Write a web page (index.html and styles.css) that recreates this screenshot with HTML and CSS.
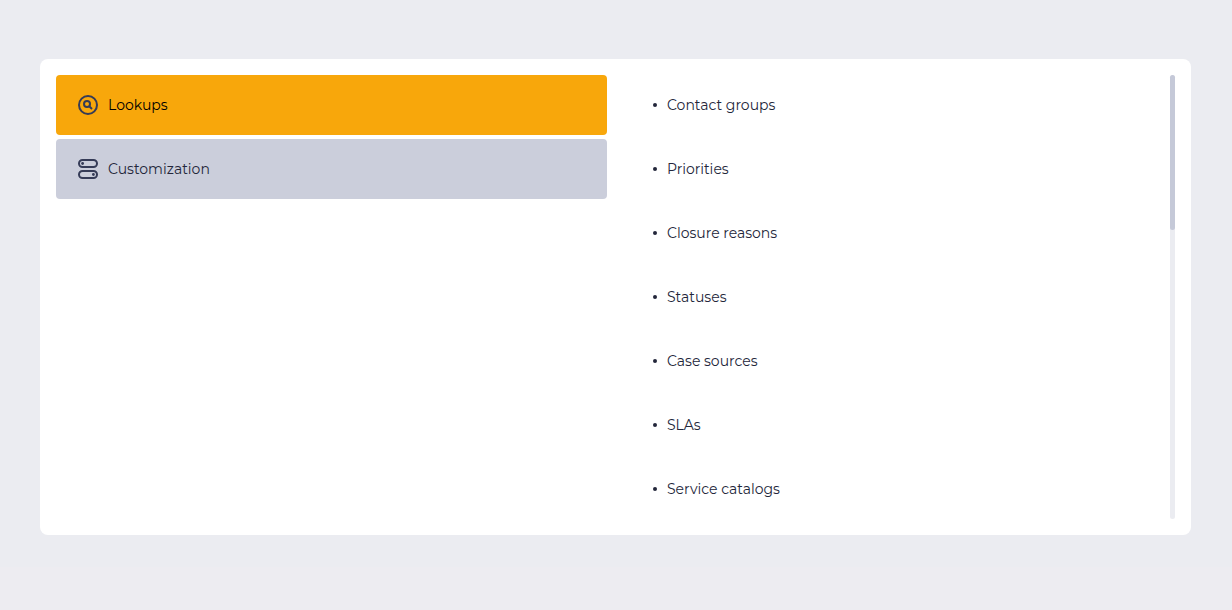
FILE: index.html
```html
<!DOCTYPE html>
<html lang="en">
<head>
  <meta charset="UTF-8">
  <title>Settings</title>
  <meta name="viewport" content="width=device-width, initial-scale=1.0">
  <link rel="stylesheet" href="styles.css">
</head>
<body>
  <main class="panel">
    <nav class="menu">
      <button type="button" class="menu-item active">
        <svg class="icon" viewBox="0 0 20 20" aria-hidden="true">
          <circle cx="10" cy="10" r="9"/>
          <circle cx="9" cy="9" r="3"/>
          <path d="M11 11L14 14"/>
        </svg>
        Lookups
      </button>
      <button type="button" class="menu-item">
        <svg class="icon" viewBox="0 0 20 20" aria-hidden="true">
          <rect x="1" y="1" width="18" height="7" rx="3.5"/>
          <rect x="1" y="12" width="18" height="7" rx="3.5"/>
          <circle class="dot" cx="4.6" cy="4.5" r="1.4"/>
          <circle class="dot" cx="15.4" cy="15.5" r="1.4"/>
        </svg>
        Customization
      </button>
    </nav>

    <ul class="links">
      <li><a href="#contact-groups">Contact groups</a></li>
      <li><a href="#priorities">Priorities</a></li>
      <li><a href="#closure-reasons">Closure reasons</a></li>
      <li><a href="#statuses">Statuses</a></li>
      <li><a href="#case-sources">Case sources</a></li>
      <li><a href="#slas">SLAs</a></li>
      <li><a href="#service-catalogs">Service catalogs</a></li>
    </ul>

    <div class="scroll-track">
      <div class="scroll-thumb"></div>
    </div>
  </main>
</body>
</html>
```

FILE: styles.css
```css
* {
  box-sizing: border-box;
}
html {
  background-color: #edecf1;
}
body {
  margin: 0;
  padding: 59px 41px 32px 40px;
  background-color: #ebecf1;
  color: #23263a;
  font-family: Montserrat, Inter, "Open Sans", sans-serif;
  font-size: 14px;
  line-height: 20px;
}
.panel {
  display: flex;
  padding: 16px;
  background-color: #fff;
  border-radius: 8px;
}
.menu, .links {
  flex: 1;
  display: flex;
  flex-direction: column;
  gap: 4px;
}
.menu-item {
  display: flex;
  align-items: center;
  gap: 10px;
  height: 60px;
  padding: 0 22px;
  border: none;
  border-radius: 4px;
  background-color: #cbcedb;
  color: inherit;
  font: inherit;
  cursor: pointer;
}
.menu-item.active {
  background-color: #f8a70b;
  color: #000;
}
.icon {
  width: 20px;
  height: 20px;
  fill: none;
  stroke: #353b57;
  stroke-width: 2;
}
.icon .dot {
  fill: #353b57;
  stroke: none;
}
.links {
  margin: 0 8px 0 4px;
  padding: 0;
  list-style: none;
}
.links a {
  display: flex;
  align-items: center;
  gap: 10px;
  height: 60px;
  padding: 0 42px;
  color: inherit;
  text-decoration: none;
}
.links a::before {
  content: "";
  width: 4px;
  height: 4px;
  border-radius: 50%;
  background-color: #23263a;
}
.scroll-track {
  width: 5px;
  border-radius: 3px;
  background-color: #ebecf1;
}
.scroll-thumb {
  height: 35%;
  border-radius: 3px;
  background-color: #c5c9d8;
}
```
